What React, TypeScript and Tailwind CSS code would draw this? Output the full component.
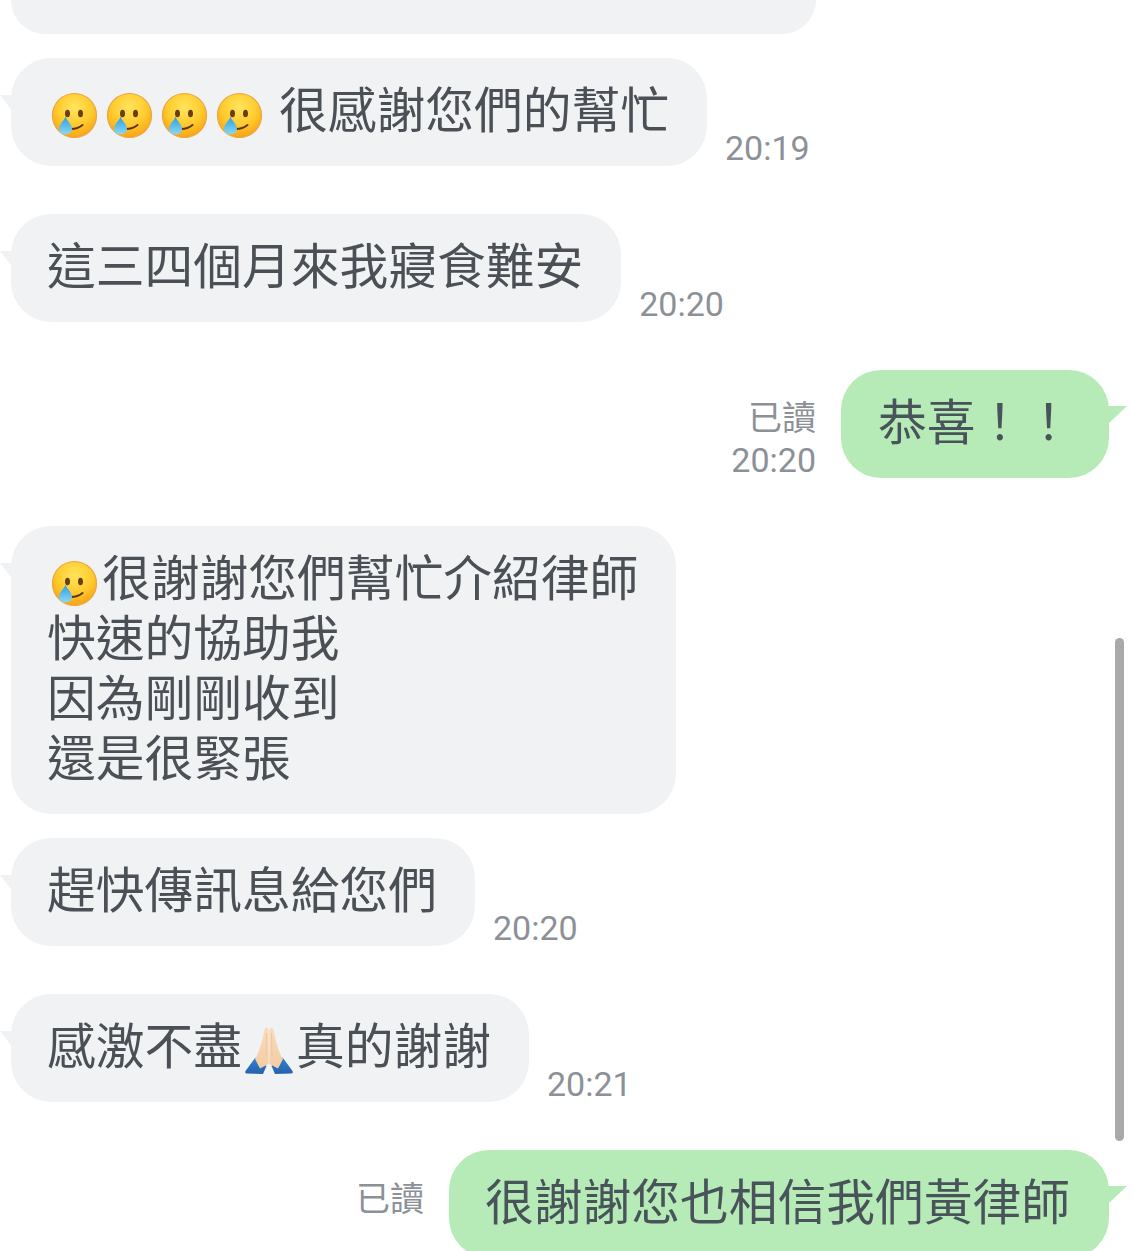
import React from "react";

const FONT = "[font-family:'Noto_Sans_CJK_TC','Noto_Sans_CJK_SC',sans-serif]";

function CryEmoji() {
  return (
    <svg width={47} height={47} viewBox="0 0 47 47" className="block">
      <defs>
        <radialGradient id="face" cx="50%" cy="32%" r="70%">
          <stop offset="0%" stopColor="#ffe45e" />
          <stop offset="55%" stopColor="#ffcc2f" />
          <stop offset="100%" stopColor="#f9a012" />
        </radialGradient>
        <linearGradient id="tear" x1="0" y1="0" x2="0" y2="1">
          <stop offset="0%" stopColor="#2f9ddd" />
          <stop offset="100%" stopColor="#8ad8f3" />
        </linearGradient>
      </defs>
      <circle cx="23.5" cy="23.5" r="22" fill="url(#face)" stroke="#e9a63f" strokeWidth="1.2" />
      <ellipse cx="16.5" cy="21.5" rx="2.5" ry="3.8" fill="#6b3d10" />
      <ellipse cx="29.5" cy="21.5" rx="2.5" ry="3.8" fill="#6b3d10" />
      <path d="M19 37 C24 37.2 28 36 31.5 33" fill="none" stroke="#5f3510" strokeWidth="2" strokeLinecap="round" />
      <path d="M14.5 24.5 C15.8 29 21 32 21 37 C21 40.4 18.2 42.4 14.5 42.4 C10.8 42.4 8 40.4 8 37 C8 32 13.2 29 14.5 24.5 Z" fill="url(#tear)" />
    </svg>
  );
}

function PrayEmoji() {
  return (
    <svg width="50" height="48" viewBox="0 0 50 48" className="block">
      <defs>
        <linearGradient id="skin" x1="0" y1="0" x2="0" y2="1">
          <stop offset="0%" stopColor="#f9dcbc" />
          <stop offset="100%" stopColor="#f3cca4" />
        </linearGradient>
        <linearGradient id="sleeve" x1="0" y1="0" x2="0" y2="1">
          <stop offset="0%" stopColor="#3583d3" />
          <stop offset="100%" stopColor="#2362ad" />
        </linearGradient>
      </defs>
      <path d="M11 32 L1.5 45 Q0.5 47.5 3 47.5 L19 48 L22.5 40 L16 31 Z" fill="url(#sleeve)" />
      <path d="M39 32 L48.5 45 Q49.5 47.5 47 47.5 L31 48 L27.5 40 L34 31 Z" fill="url(#sleeve)" />
      <path d="M24.6 38 L24.6 5 C24.3 1 21.5 0 20.5 4 C18.5 14 15.5 26 11 33 L16 42.5 Z" fill="url(#skin)" />
      <path d="M25.4 38 L25.4 5 C25.7 1 28.5 0 29.5 4 C31.5 14 34.5 26 39 33 L34 42.5 Z" fill="url(#skin)" />
      <path d="M22.5 7 L22 30 M27.5 7 L28 30" stroke="#ecc097" strokeWidth="0.7" fill="none" />
    </svg>
  );
}

function Tail({ side }: { side: "left" | "right" }) {
  return side === "left" ? (
    <svg width="16" height="20" viewBox="0 0 16 20" className="absolute left-[-11px] top-[37px]">
      <path d="M0 0 L16 0 L16 20 L13 17 Z" fill="#f1f2f4" />
    </svg>
  ) : (
    <svg width="22" height="20" viewBox="0 0 22 20" className="absolute right-[-18px] top-[36px]">
      <path d="M22 0 L0 0 L0 20 L3 18 Z" fill="#b6ebb8" />
    </svg>
  );
}

function Time({ children }: { children: React.ReactNode }) {
  return (
    <div className="mb-[-2px] whitespace-nowrap text-[34px] leading-[40px] text-[#8b9197] [font-family:Roboto,sans-serif]">
      {children}
    </div>
  );
}

function Left({ children, time }: { children: React.ReactNode; time?: string }) {
  return (
    <div className="flex items-end gap-[18px] pl-[11px]">
      <div className="relative whitespace-nowrap rounded-[40px] bg-[#f1f2f4] pb-[29px] pl-[36px] pr-[38px] pt-[19px] text-[48.75px] leading-[60px] text-[#4a5056]">
        <Tail side="left" />
        {children}
      </div>
      {time && <Time>{time}</Time>}
    </div>
  );
}

function Right({ children, meta, box }: { children: React.ReactNode; meta: React.ReactNode; box: string }) {
  return (
    <div className="flex items-end justify-end gap-[25px] pr-[24px]">
      {meta}
      <div className={`relative whitespace-nowrap rounded-[40px] bg-[#b6ebb8] pb-[29px] pt-[19px] text-[48.75px] leading-[60px] text-[#48545a] ${box}`}>
        <Tail side="right" />
        {children}
      </div>
    </div>
  );
}

const Emo = () => (
  <span className="my-[-20px] inline-block w-[55px] pl-[4px] align-[9.5px]">
    <CryEmoji />
  </span>
);

export default function App() {
  return (
    <div className={`relative h-[1251px] w-[1133px] overflow-hidden bg-white ${FONT}`}>
      <div className="flex flex-col">
        <div className="pl-[11px]">
          <div className="h-[34px] w-[805px] rounded-b-[40px] bg-[#f1f2f4]" />
        </div>

        <div className="mt-[24px]">
          <Left time="20:19">
            <Emo />
            <Emo />
            <Emo />
            <Emo />
            <span className="ml-[12px]">很感謝您們的幫忙</span>
          </Left>
        </div>

        <div className="mt-[48px]">
          <Left time="20:20">這三四個月來我寢食難安</Left>
        </div>

        <div className="mt-[48px]">
          <Right
            box="w-[268px] pl-[37px]"
            meta={
              <div className="flex flex-col items-end text-[#8b9197]">
                <div className="text-[34px] leading-[48px]">已讀</div>
                <div className="mb-[-2px] text-[34px] leading-[40px] [font-family:Roboto,sans-serif]">20:20</div>
              </div>
            }
          >
            恭喜！！
          </Right>
        </div>

        <div className="mt-[48px]">
          <Left>
            <div>
              <Emo />
              很謝謝您們幫忙介紹律師
            </div>
            <div>快速的協助我</div>
            <div>因為剛剛收到</div>
            <div>還是很緊張</div>
          </Left>
        </div>

        <div className="mt-[24px]">
          <Left time="20:20">趕快傳訊息給您們</Left>
        </div>

        <div className="mt-[48px]">
          <Left time="20:21">
            感激不盡
            <span className="my-[-20px] inline-block w-[54px] pl-[2px] align-[10px]">
              <PrayEmoji />
            </span>
            真的謝謝
          </Left>
        </div>

        <div className="mt-[48px]">
          <Right box="w-[660px] pl-[36px]" meta={<div className="mb-[41px] text-[34px] leading-[40px] text-[#8b9197]">已讀</div>}>
            很謝謝您也相信我們黃律師
          </Right>
        </div>
      </div>

      <div className="absolute left-[1115px] top-[638px] h-[503px] w-[9px] rounded-full bg-[#a9a9a9]" />
    </div>
  );
}
